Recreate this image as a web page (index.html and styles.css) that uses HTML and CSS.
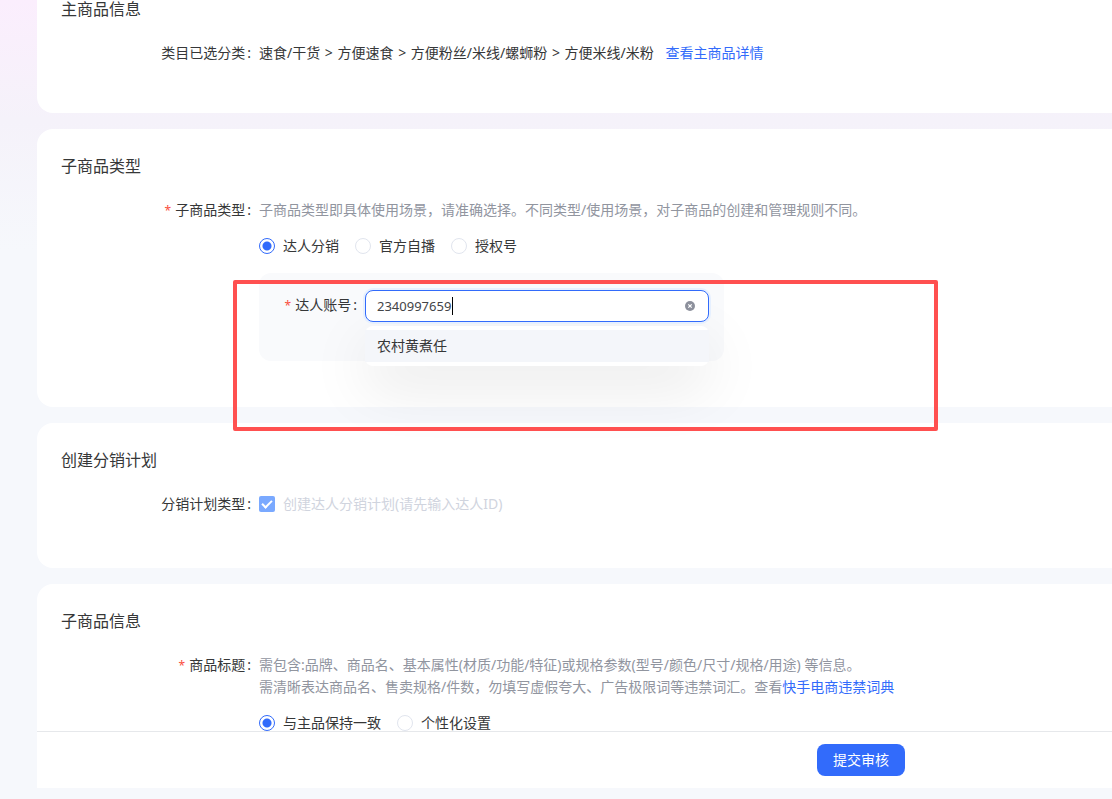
FILE: index.html
```html
<!DOCTYPE html>
<html lang="zh-CN">
<head>
    <meta charset="UTF-8">
    <meta name="viewport" content="width=device-width, initial-scale=1.0">
    <title>创建子商品</title>
    <link rel="stylesheet" href="styles.css">
</head>
<body>
    <main class="content">
        <section class="card card-main">
            <h2>主商品信息</h2>
            <div class="form-item">
                <div class="form-label">类目已选分类<span class="colon">:</span></div>
                <div class="form-control">
                    速食/干货 <span class="sep">&gt;</span> 方便速食 <span class="sep">&gt;</span> 方便粉丝/米线/螺蛳粉 <span class="sep">&gt;</span> 方便米线/米粉
                    <a href="#" class="detail-link">查看主商品详情</a>
                </div>
            </div>
        </section>

        <section class="card card-type">
            <h2>子商品类型</h2>
            <div class="form-item">
                <div class="form-label"><span class="required">*</span>子商品类型<span class="colon">:</span></div>
                <div class="form-control">
                    <p class="tips">子商品类型即具体使用场景，请准确选择。不同类型/使用场景，对子商品的创建和管理规则不同。</p>
                    <div class="radio-group">
                        <label><input type="radio" name="itemType" checked>达人分销</label>
                        <label><input type="radio" name="itemType">官方自播</label>
                        <label><input type="radio" name="itemType">授权号</label>
                    </div>
                    <div class="panel">
                        <label class="panel-label" for="account"><span class="required">*</span>达人账号<span class="colon">:</span></label>
                        <div class="select">
                            <div class="select-box">
                                <input type="text" id="account" value="2340997659">
                                <span class="caret"></span>
                                <button type="button" class="clear" aria-label="清除">
                                    <svg width="12" height="12" viewBox="0 0 12 12">
                                        <circle cx="6" cy="6" r="5" fill="#8c909c"/>
                                        <path d="M4.3 4.3l3.4 3.4M7.7 4.3L4.3 7.7" stroke="#fff" stroke-width="1.2"/>
                                    </svg>
                                </button>
                            </div>
                            <ul class="dropdown">
                                <li>农村黄煮任</li>
                            </ul>
                        </div>
                        <div class="mark"></div>
                    </div>
                </div>
            </div>
        </section>

        <section class="card card-plan">
            <h2>创建分销计划</h2>
            <div class="form-item">
                <div class="form-label">分销计划类型<span class="colon">:</span></div>
                <div class="form-control">
                    <label class="check"><input type="checkbox" checked disabled>创建达人分销计划(请先输入达人ID)</label>
                </div>
            </div>
        </section>

        <section class="card">
            <h2>子商品信息</h2>
            <div class="form-item">
                <div class="form-label"><span class="required">*</span>商品标题<span class="colon">:</span></div>
                <div class="form-control">
                    <p class="tips">需包含:品牌、商品名、基本属性(材质/功能/特征)或规格参数(型号/颜色/尺寸/规格/用途) 等信息。</p>
                    <p class="tips">需清晰表达商品名、售卖规格/件数，勿填写虚假夸大、广告极限词等违禁词汇。查看<a href="#">快手电商违禁词典</a></p>
                    <div class="radio-group">
                        <label><input type="radio" name="titleType" checked>与主品保持一致</label>
                        <label><input type="radio" name="titleType">个性化设置</label>
                    </div>
                </div>
            </div>
        </section>
    </main>

    <footer class="footer">
        <button type="button" class="submit">提交审核</button>
    </footer>
</body>
</html>
```

FILE: styles.css
```css
* {
    box-sizing: border-box;
}

body {
    margin: 0;
    height: 100vh;
    padding: 0 0 11px 37px;
    display: flex;
    flex-direction: column;
    overflow: hidden;
    font-family: "Noto Sans", "Noto Sans CJK SC", sans-serif;
    font-size: 14px;
    line-height: 22px;
    color: #363738;
    background: linear-gradient(#fbeefd 0, #f5f2fa 120px, #f6f8fc 250px);
}

a {
    color: #326bfb;
    text-decoration: none;
}

h2 {
    margin: 0 0 20px;
    font-size: 16px;
    font-weight: 400;
    line-height: 26px;
}

.content {
    flex: 1;
    min-height: 0;
    display: flex;
    flex-direction: column;
    gap: 16px;
    margin-top: -28px;
    overflow: hidden;
}

.card {
    flex-shrink: 0;
    padding: 24px;
    background: #fff;
    border-radius: 16px 0 0 16px;
}

.card-main {
    padding-bottom: 49px;
}

.card-type {
    padding-bottom: 46px;
}

.card-plan {
    padding-bottom: 53px;
}

/* 表单 */
.form-item {
    display: flex;
}

.form-label {
    width: 198px;
    flex-shrink: 0;
    text-align: right;
}

.form-control {
    flex: 1;
}

.colon {
    margin: 0 8px 0 2px;
}

.required {
    margin-right: 4px;
    font-size: 12px;
    color: #fa4e3e;
}

.sep {
    margin: 0 1px;
}

.detail-link {
    margin-left: 8px;
}

.tips {
    margin: 0;
    color: #91959f;
}

.radio-group {
    display: flex;
    gap: 16px;
    margin-top: 14px;
}

.radio-group label,
.check {
    display: flex;
    align-items: center;
    gap: 8px;
}

input[type="radio"] {
    appearance: none;
    width: 16px;
    height: 16px;
    margin: 0;
    border: 1px solid #e1e5ee;
    border-radius: 50%;
    background: #fff;
}

input[type="radio"]:checked {
    border-color: #326bfb;
    background: radial-gradient(circle, #326bfb 4px, #fff 5px);
}

input[type="checkbox"] {
    appearance: none;
    display: grid;
    place-items: center;
    width: 16px;
    height: 16px;
    margin: 0;
    border-radius: 2px;
    background: #7aa9ff;
}

input[type="checkbox"]::after {
    content: "";
    box-sizing: border-box;
    width: 6px;
    height: 10px;
    margin-bottom: 2px;
    border: solid #fff;
    border-width: 0 2px 2px 0;
    transform: rotate(45deg);
}

.check {
    color: #d0d4de;
}

/* 达人账号 */
.panel {
    position: relative;
    display: flex;
    width: 465px;
    height: 88px;
    margin-top: 16px;
    padding: 17px 15px 0 0;
    background: #f9fafc;
    border-radius: 12px;
}

.panel-label {
    width: 106px;
    padding-top: 4px;
    text-align: right;
}

.select {
    position: relative;
    flex: 1;
}

.select-box {
    position: relative;
    z-index: 2;
    display: flex;
    align-items: center;
    height: 32px;
    padding: 0 12px 0 11px;
    background: #fff;
    border: 1px solid #326bfb;
    border-radius: 8px;
    box-shadow: 0 0 0 2px #e6f0ff;
}

.select-box input {
    flex: 1;
    min-width: 0;
    padding: 0;
    border: 0;
    outline: 0;
    font: inherit;
    font-size: 13px;
    color: #434447;
    background: transparent;
}

.caret {
    position: absolute;
    left: 86px;
    width: 1px;
    height: 18px;
    background: #000;
}

.clear {
    display: flex;
    padding: 0;
    border: 0;
    background: none;
    cursor: pointer;
}

.dropdown {
    position: absolute;
    top: 36px;
    left: 0;
    right: 0;
    z-index: 1;
    margin: 0;
    padding: 4px 0;
    list-style: none;
    background: #fff;
    border-radius: 8px;
    box-shadow: 0 20px 60px rgba(0, 0, 0, 0.1);
}

.dropdown li {
    padding: 5px 12px;
    background: #f4f6fa;
}

/* 红色标注框 */
.mark {
    position: absolute;
    top: 7px;
    left: -26px;
    z-index: 3;
    width: 705px;
    height: 151px;
    border: 4px solid #ff5050;
    border-radius: 2px;
    pointer-events: none;
}

/* 底部操作栏 */
.footer {
    display: flex;
    justify-content: flex-end;
    padding: 12px 207px 12px 0;
    background: #fff;
    border-top: 1px solid #e6e8eb;
}

.submit {
    height: 32px;
    padding: 0 16px;
    border: 0;
    border-radius: 8px;
    background: #326bfb;
    color: #fff;
    font: inherit;
    cursor: pointer;
}
```
